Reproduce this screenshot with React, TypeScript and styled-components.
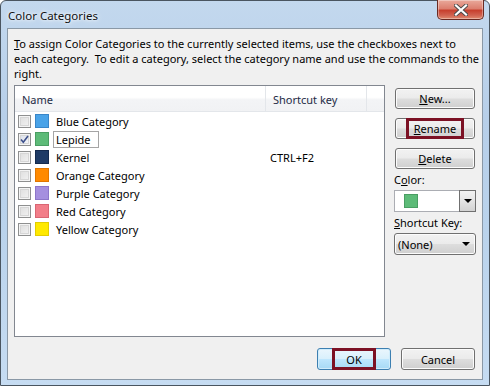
import React from 'react';
import styled, {createGlobalStyle, css} from 'styled-components';

const categories = [
    {name: 'Blue Category', color: '#4aa3e8', border: '#3a86c8', checked: false, shortcut: ''},
    {name: 'Lepide', color: '#5dbb78', border: '#4a9e63', checked: true, shortcut: '', editing: true},
    {name: 'Kernel', color: '#1f3b66', border: '#142a4d', checked: false, shortcut: 'CTRL+F2'},
    {name: 'Orange Category', color: '#ff8a00', border: '#e07600', checked: false, shortcut: ''},
    {name: 'Purple Category', color: '#a58fdf', border: '#8d76c9', checked: false, shortcut: ''},
    {name: 'Red Category', color: '#f27e89', border: '#d96673', checked: false, shortcut: ''},
    {name: 'Yellow Category', color: '#ffe900', border: '#e3cd00', checked: false, shortcut: ''},
]

const GlobalStyle = createGlobalStyle`
    body {
        margin: 0;
        font-family: 'Noto Sans', 'Liberation Sans', sans-serif;
        font-size: 11px;
        color: #000;
    }
`

export default function App() {
    return (
        <>
            <GlobalStyle/>
            <Window>
                <TitleBar>
                    <Title>Color Categories</Title>
                    <CloseButton>
                        <svg width="14" height="12" viewBox="0 0 14 12">
                            <path d="M2 1.5 L12 10.5 M12 1.5 L2 10.5" stroke="#4a4a4a" strokeWidth="4" strokeLinecap="square"/>
                            <path d="M2 1.5 L12 10.5 M12 1.5 L2 10.5" stroke="#fff" strokeWidth="2.2" strokeLinecap="square"/>
                        </svg>
                    </CloseButton>
                </TitleBar>
                <Client>
                    <Intro>
                        <u>T</u>o assign Color Categories to the currently selected items, use the checkboxes next to<br/>
                        each category.&nbsp; To edit a category, select the category name and use the commands to the<br/>
                        right.
                    </Intro>
                    <Main>
                        <ListPanel>
                            <Header>
                                <HeaderCell $width={251}>Name</HeaderCell>
                                <HeaderCell $width={101}>Shortcut key</HeaderCell>
                                <HeaderCell $width={17}/>
                            </Header>
                            {categories.map((c) => (
                                <Row key={c.name}>
                                    <Check $checked={c.checked}>
                                        {c.checked && (
                                            <svg width="9" height="9" viewBox="0 0 9 9">
                                                <path d="M1 4.5 L3.3 7.2 L8 1" stroke="#3c4f8a" strokeWidth="1.6" fill="none"/>
                                            </svg>
                                        )}
                                    </Check>
                                    <Swatch $color={c.color} $border={c.border}/>
                                    <NameCell>
                                        <NameText $editing={c.editing}>{c.name}</NameText>
                                    </NameCell>
                                    <ShortcutCell>{c.shortcut}</ShortcutCell>
                                </Row>
                            ))}
                        </ListPanel>
                        <Side>
                            <Button><u>N</u>ew...</Button>
                            <Button><Focus $pad={5}><u>R</u>ename</Focus></Button>
                            <Button><u>D</u>elete</Button>
                            <Label>C<u>o</u>lor:</Label>
                            <ColorCombo>
                                <ComboValue>
                                    <Swatch $color="#5dbb78" $border="#4a9e63"/>
                                </ComboValue>
                                <ComboArrow>
                                    <Arrow/>
                                </ComboArrow>
                            </ColorCombo>
                            <Label><u>S</u>hortcut Key:</Label>
                            <Dropdown>
                                (None)
                                <Arrow/>
                            </Dropdown>
                        </Side>
                    </Main>
                    <Footer>
                        <Button $primary $wide><Focus $pad={11}>OK</Focus></Button>
                        <Button $wide>Cancel</Button>
                    </Footer>
                </Client>
            </Window>
        </>
    );
}

const Window = styled.div`
    width: 490px;
    height: 386px;
    box-sizing: border-box;
    border: 1px solid #4a5560;
    border-radius: 6px 6px 0 0;
    background: linear-gradient(180deg, #c3d8ee 0%, #b7cfe9 30%, #bad3ec 60%, #c6dcf2 100%);
    display: flex;
    flex-direction: column;
    padding: 0 6px 5px 6px;
`
const TitleBar = styled.div`
    height: 27px;
    display: flex;
    align-items: flex-start;
`
const Title = styled.span`
    margin: 7px 0 0 1px;
    font-size: 11.5px;
    color: #111;
    text-shadow: 0 0 6px #fff, 0 0 3px #fff;
`
const CloseButton = styled.div`
    margin: -1px -1px 0 auto;
    width: 47px;
    height: 20px;
    box-sizing: border-box;
    border: 1px solid #6a2a22;
    border-top: none;
    border-radius: 0 0 5px 5px;
    background: linear-gradient(180deg, #e9a99b 0%, #dc7f6f 45%, #c7402e 55%, #d0614f 80%, #e08a6e 100%);
    box-shadow: inset 0 0 0 1px rgba(255, 255, 255, 0.35);
    display: flex;
    justify-content: center;
    align-items: center;
`
const Client = styled.div`
    flex: 1;
    border: 1px solid #8a98a6;
    background: #f0f0f0;
    display: flex;
    flex-direction: column;
    padding: 7px 6px 0 6px;
`
const Intro = styled.p`
    margin: 0 0 4px 0;
    padding-left: 0;
    line-height: 15px;
    white-space: nowrap;
`
const Main = styled.div`
    display: flex;
    gap: 9px;
`
const ListPanel = styled.div`
    width: 371px;
    height: 252px;
    box-sizing: border-box;
    border: 1px solid #828790;
    background: #fff;
`
const Header = styled.div`
    display: flex;
    height: 25px;
    background: linear-gradient(180deg, #ffffff 0%, #ffffff 45%, #f3f4f6 55%, #f1f2f4 100%);
    border-bottom: 1px solid #e3e6ea;
`
const HeaderCell = styled.div<{ $width: number }>`
    width: ${p => p.$width}px;
    box-sizing: border-box;
    padding: 2px 0 0 7px;
    display: flex;
    align-items: center;
    color: #1e2b45;
    border-right: 1px solid #e3e6ea;
    &:last-child {
        border-right: none;
    }
`
const Row = styled.div`
    display: flex;
    align-items: center;
    height: 18px;
    padding-left: 3px;
`
const Check = styled.div<{ $checked?: boolean }>`
    width: 13px;
    height: 13px;
    box-sizing: border-box;
    border: 1px solid #8e8f8f;
    background: linear-gradient(135deg, #dcdcdc 0%, #f4f4f4 100%);
    box-shadow: inset 0 0 0 1px #f4f4f4, inset 0 0 0 2px #d6d6d6;
    display: flex;
    justify-content: center;
    align-items: center;
    ${p => p.$checked && css`
        background: linear-gradient(135deg, #d8dde8 0%, #f6f7fa 100%);
    `}
`
const Swatch = styled.div<{ $color: string; $border: string }>`
    width: 14px;
    height: 14px;
    margin-left: 4px;
    box-sizing: border-box;
    border: 1px solid ${p => p.$border};
    background: ${p => p.$color};
`
const NameCell = styled.div`
    width: 214px;
    padding-left: 4px;
    display: flex;
`
const NameText = styled.span<{ $editing?: boolean }>`
    padding: 0 2px;
    border: 1px solid transparent;
    line-height: 15px;
    ${p => p.$editing && css`
        border-color: #a5a5a5;
        padding-right: 7px;
    `}
`
const ShortcutCell = styled.div`
    padding-left: 3px;
`
const Side = styled.div`
    width: 82px;
    padding-top: 3px;
    display: flex;
    flex-direction: column;
`
const Button = styled.div<{ $primary?: boolean; $wide?: boolean }>`
    height: 21px;
    margin: 0 1px 9px 1px;
    box-sizing: border-box;
    border: 1px solid #707070;
    border-radius: 3px;
    background: linear-gradient(180deg, #f2f2f2 0%, #ebebeb 48%, #dddddd 52%, #cfcfcf 100%);
    box-shadow: inset 0 0 0 1px #fcfcfc;
    display: flex;
    justify-content: center;
    align-items: center;
    ${p => p.$wide && css`
        width: 74px;
        height: 22px;
        margin: 0;
    `}
    ${p => p.$primary && css`
        border-color: #3c7fb1;
        background: linear-gradient(180deg, #eaf6fd 0%, #d9f0fc 48%, #bee6fd 52%, #a7d9f5 100%);
        box-shadow: inset 0 0 0 1px #d0ecfb;
    `}
`
const Focus = styled.span<{ $pad: number }>`
    align-self: stretch;
    margin: -1px 0;
    box-sizing: border-box;
    border: 3px solid #7c1124;
    padding: 0 ${p => p.$pad}px;
    display: flex;
    align-items: center;
`
const Label = styled.div`
    margin: -7px 0 0 0;
    height: 18px;
    line-height: 18px;
    & + div {
        margin-top: 1px;
    }
`
const ColorCombo = styled.div`
    height: 22px;
    box-sizing: border-box;
    border: 1px solid #abadb3;
    background: #fff;
    display: flex;
    margin-bottom: 9px;
`
const ComboValue = styled.div`
    flex: 1;
    display: flex;
    align-items: center;
    padding-left: 5px;
`
const ComboArrow = styled.div`
    width: 17px;
    box-sizing: border-box;
    border: 1px solid #707070;
    margin: -1px -1px -1px 0;
    background: linear-gradient(180deg, #f2f2f2 0%, #e4e4e4 50%, #d2d2d2 100%);
    display: flex;
    justify-content: center;
    align-items: center;
`
const Arrow = styled.span`
    width: 0;
    height: 0;
    border-left: 4px solid transparent;
    border-right: 4px solid transparent;
    border-top: 4px solid #000;
`
const Dropdown = styled.div`
    height: 22px;
    box-sizing: border-box;
    border: 1px solid #707070;
    border-radius: 3px;
    background: linear-gradient(180deg, #f2f2f2 0%, #ebebeb 48%, #dddddd 52%, #cfcfcf 100%);
    box-shadow: inset 0 0 0 1px #fcfcfc;
    display: flex;
    align-items: center;
    justify-content: space-between;
    padding: 0 5px 0 3px;
`
const Footer = styled.div`
    display: flex;
    justify-content: flex-end;
    gap: 10px;
    margin-top: 11px;
    padding-right: 1px;
`
